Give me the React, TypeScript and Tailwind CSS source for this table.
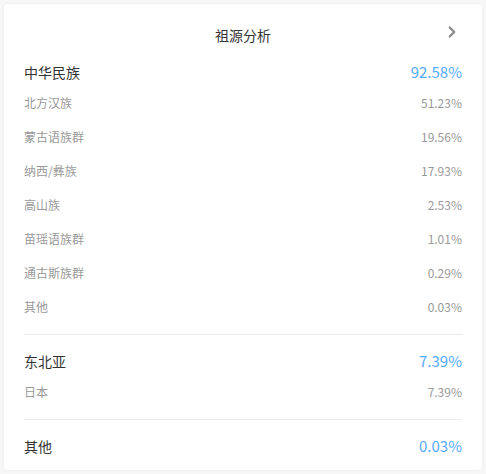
import { ChevronRight } from 'lucide-react';

type Item = { name: string; value: string };
type Group = { name: string; value: string; items: Item[] };

const groups: Group[] = [
  {
    name: '中华民族',
    value: '92.58%',
    items: [
      { name: '北方汉族', value: '51.23%' },
      { name: '蒙古语族群', value: '19.56%' },
      { name: '纳西/彝族', value: '17.93%' },
      { name: '高山族', value: '2.53%' },
      { name: '苗瑶语族群', value: '1.01%' },
      { name: '通古斯族群', value: '0.29%' },
      { name: '其他', value: '0.03%' },
    ],
  },
  {
    name: '东北亚',
    value: '7.39%',
    items: [{ name: '日本', value: '7.39%' }],
  },
  { name: '其他', value: '0.03%', items: [] },
];

export default function App() {
  return (
    <div
      className="min-h-[474px] w-[486px] bg-[#f7f7f7] p-[4px]"
      style={{ fontFamily: '"Noto Sans CJK SC", "Noto Sans", sans-serif' }}
    >
      <div className="rounded-[4px] bg-white px-[20px] pt-[21px] pb-[10px] shadow-[0_0_3px_rgba(0,0,0,0.06)]">
        {/* Title */}
        <div className="mb-[13px] grid h-[20px] grid-cols-[1fr_auto_1fr] items-center">
          <span />
          <span className="text-[14px] leading-[20px] text-[#333]">祖源分析</span>
          <ChevronRight
            className="-mt-[6px] mr-[1px] h-[18px] w-[18px] justify-self-end text-[#8a8a8a]"
            strokeWidth={3}
          />
        </div>

        {groups.map((g, i) => (
          <div
            key={g.name + i}
            className={
              i < groups.length - 1
                ? 'border-b border-[#ebebeb] pb-[10px]'
                : ''
            }
          >
            <div
              className={
                'flex h-[28px] items-center justify-between ' +
                (i > 0 ? 'mt-[12px]' : '')
              }
            >
              <span className="text-[14px] text-[#333]">{g.name}</span>
              <span className="text-[15px] text-[#55aaff]">{g.value}</span>
            </div>
            {g.items.map((it) => (
              <div
                key={it.name}
                className="flex h-[34px] items-center justify-between text-[12px] text-[#999]"
              >
                <span>{it.name}</span>
                <span>{it.value}</span>
              </div>
            ))}
          </div>
        ))}
      </div>
    </div>
  );
}
